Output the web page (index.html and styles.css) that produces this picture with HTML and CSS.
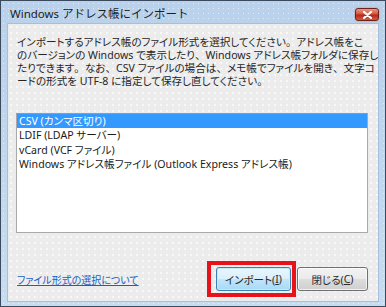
FILE: index.html
```html
<!DOCTYPE html>
<html lang="ja">
<head>
<meta charset="utf-8">
<link rel="stylesheet" href="styles.css">
</head>
<body>
<div class="window">
  <div class="titlebar">
    <span class="title">Windows アドレス帳にインポート</span>
    <span class="close"><svg width="11" height="8" viewBox="0 0 11 8"><path d="M2 1 L9 7 M9 1 L2 7" stroke="#fff" stroke-width="2.2" stroke-linecap="round"/></svg></span>
  </div>
  <div class="client">
    <p class="desc">インポートするアドレス帳のファイル形式を選択してください<span class="fw">。</span>アドレス帳をこ<br>のバージョンの Windows で表示したり<span class="fw">、</span>Windows アドレス帳フォルダに保存し<br>たりできます<span class="fw">。</span>なお<span class="fw">、</span>CSV ファイルの場合は<span class="fw">、</span>メモ帳でファイルを開き<span class="fw">、</span>文字コ<br>ードの形式を UTF-8 に指定して保存し直してください<span class="fw">。</span></p>
    <ul class="list">
      <li class="selected">CSV (カンマ区切り)</li>
      <li>LDIF (LDAP サーバー)</li>
      <li>vCard (VCF ファイル)</li>
      <li>Windows アドレス帳ファイル (Outlook Express アドレス帳)</li>
    </ul>
    <div class="footer">
      <a class="link" href="#">ファイル形式の選択について</a>
      <div class="buttons">
        <span class="btn default">インポート(<u>I</u>)<span class="highlight"></span></span>
        <span class="btn">閉じる(<u>C</u>)</span>
      </div>
    </div>
  </div>
</div>
</body>
</html>
```
FILE: styles.css
```css
* { box-sizing: border-box; }
body {
  margin: 0;
  background: #fff;
  font-family: "Noto Sans", "Noto Sans CJK JP", sans-serif;
}
.window {
  width: 386px;
  height: 307px;
  border: 1px solid #3b4a5c;
  background-color: #bed5ec;
  background-image:
    radial-gradient(circle, rgba(255,255,255,0.55) 0.6px, transparent 0.9px),
    linear-gradient(#b9d1ea, #c7dcf0);
  background-size: 5px 5px, 100% 100%;
  display: flex;
  flex-direction: column;
  padding: 0 6px 4px 6px;
}
.titlebar {
  height: 22px;
  display: flex;
  align-items: center;
  justify-content: space-between;
  padding-left: 3px;
  padding-top: 1px;
}
.title {
  font-size: 11.5px;
  color: #1c1c1c;
}
.close {
  width: 24px;
  height: 13px;
  margin-top: 4px;
  border: 1px solid #6e2219;
  border-radius: 3px;
  background: linear-gradient(#e89a8a 0%, #d2553f 45%, #b8271a 55%, #d35a40 100%);
  box-shadow: 0 0 2px rgba(200,60,40,0.5);
  display: flex;
  align-items: center;
  justify-content: center;
}
.client {
  flex: 1;
  border: 1px solid #a5bfdc;
  background-color: #ececec;
  background-image: radial-gradient(circle, rgba(255,255,255,0.95) 0.6px, transparent 0.9px);
  background-size: 6px 6px;
  display: flex;
  flex-direction: column;
  padding: 0 10px 10px 8px;
}
.desc {
  margin: 12px 0 0 1px;
  font-size: 10.6px;
  line-height: 13px;
  color: #262626;
  font-feature-settings: "palt" 1;
  white-space: nowrap;
}
.fw {
  font-feature-settings: normal;
}
.list {
  list-style: none;
  margin: 25px 0 0 0;
  padding: 0;
  height: 120px;
  background: #fff;
  border: 1px solid #a9a9a9;
  border-top-color: #9a9a9a;
}
.list li {
  height: 14.3px;
  line-height: 14.3px;
  padding-left: 2px;
  font-size: 10.6px;
  color: #1a1a1a;
  font-feature-settings: "palt" 1;
  white-space: nowrap;
}
.list li.selected {
  background: #3399ff;
  color: #fff;
}
.footer {
  margin-top: auto;
  display: flex;
  align-items: center;
  justify-content: space-between;
}
.link {
  margin-left: 1px;
  font-size: 10px;
  color: #1a5fc4;
  text-decoration: underline;
  font-feature-settings: "palt" 1;
}
.buttons {
  display: flex;
  gap: 6px;
}
.btn {
  position: relative;
  width: 71px;
  height: 24px;
  border: 1px solid #707070;
  border-radius: 3px;
  background: linear-gradient(#f2f2f2 0%, #ebebeb 48%, #dddddd 52%, #cfcfcf 100%);
  box-shadow: inset 0 0 0 1px rgba(255,255,255,0.7);
  display: flex;
  align-items: center;
  justify-content: center;
  font-size: 10.5px;
  color: #2a2a2a;
  font-feature-settings: "palt" 1;
}
.btn u { text-decoration: underline; }
.btn.default {
  width: 75px;
  border-color: #3c7fb1;
  background: linear-gradient(#eaf6fd 0%, #d9f0fc 48%, #bee6fd 52%, #a7d9f5 100%);
  box-shadow: inset 0 0 0 1px #c6ecfc;
}
.highlight {
  position: absolute;
  left: -10px;
  right: -6px;
  top: -7px;
  bottom: -7px;
  border: 4px solid #e8121a;
  pointer-events: none;
}
```
